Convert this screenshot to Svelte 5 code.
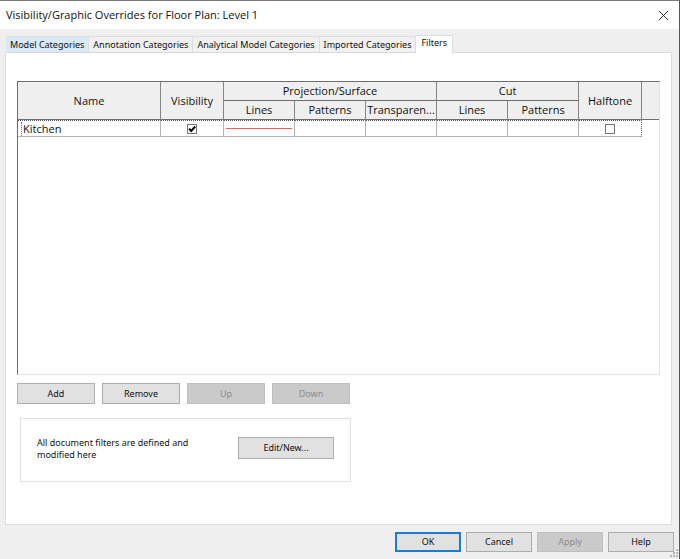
<script>
  const tabs = ['Model Categories', 'Annotation Categories', 'Analytical Model Categories', 'Imported Categories', 'Filters'];
  let active = $state('Filters');
  let visible = $state(true);
  let halftone = $state(false);
</script>

<div class="window">
  <header>
    <h1>Visibility/Graphic Overrides for Floor Plan: Level 1</h1>
    <button class="close" aria-label="Close">
      <svg width="11" height="11" viewBox="0 0 11 11" fill="none" stroke="#333" stroke-width="1"><path d="M1 1 10 10M10 1 1 10" /></svg>
    </button>
  </header>

  <main>
    <div class="tabs" role="tablist">
      {#each tabs as tab, i}
        <button role="tab" class="tab" class:hot={i === 0} class:active={tab === active} aria-selected={tab === active} onclick={() => (active = tab)}>{tab}</button>
      {/each}
    </div>

    <section class="panel">
      <div class="grid">
        <table>
          <colgroup>
            <col class="name" /><col class="mid" /><col class="sub" /><col class="sub" /><col class="sub" /><col class="sub" /><col class="sub" /><col class="mid" /><col />
          </colgroup>
          <thead>
            <tr>
              <th rowspan="2">Name</th>
              <th rowspan="2">Visibility</th>
              <th colspan="3">Projection/Surface</th>
              <th colspan="2">Cut</th>
              <th rowspan="2">Halftone</th>
              <td rowspan="2" class="rest"></td>
            </tr>
            <tr>
              <th>Lines</th>
              <th>Patterns</th>
              <th>Transparen...</th>
              <th>Lines</th>
              <th>Patterns</th>
            </tr>
          </thead>
          <tbody>
            <tr>
              <td class="label"><span>Kitchen</span></td>
              <td><input type="checkbox" aria-label="Visibility" bind:checked={visible} /></td>
              <td><div class="line"></div></td>
              <td></td>
              <td></td>
              <td></td>
              <td></td>
              <td class="end"><input type="checkbox" aria-label="Halftone" bind:checked={halftone} /></td>
              <td class="blank"></td>
            </tr>
          </tbody>
        </table>
      </div>

      <div class="actions">
        <button class="btn">Add</button>
        <button class="btn">Remove</button>
        <button class="btn" disabled>Up</button>
        <button class="btn" disabled>Down</button>
      </div>

      <div class="group">
        <p>All document filters are defined and modified here</p>
        <button class="btn">Edit/New...</button>
      </div>
    </section>
  </main>

  <footer>
    <button class="btn primary">OK</button>
    <button class="btn">Cancel</button>
    <button class="btn" disabled>Apply</button>
    <button class="btn">Help</button>
    <svg class="grip" width="10" height="10" viewBox="0 0 10 10" fill="#b5b5b5"><path d="M7 1h2v2H7zM7 4h2v2H7zM4 4h2v2H4zM7 7h2v2H7zM4 7h2v2H4zM1 7h2v2H1z" /></svg>
  </footer>
</div>

<style>
  :global(body) {
    margin: 0;
  }
  .window {
    box-sizing: border-box;
    min-height: 100vh;
    display: flex;
    flex-direction: column;
    border-top: 1px solid #7b7979;
    border-right: 1px solid #555;
    background: #efefef;
    color: #111;
    font: 9px/12px "Noto Sans", "Open Sans", sans-serif;
    position: relative;
  }
  button {
    font: inherit;
    color: inherit;
    padding: 0;
    margin: 0;
  }
  header {
    height: 28px;
    background: #fff;
    display: flex;
    align-items: center;
    justify-content: space-between;
    padding: 0 10px 0 6px;
  }
  h1 {
    margin: 0;
    font: 400 11px/16px "Open Sans", "Noto Sans", sans-serif;
  }
  .close {
    border: 0;
    background: none;
    width: 11px;
    height: 11px;
    display: flex;
  }
  main {
    flex: 1;
    display: flex;
    flex-direction: column;
    padding: 6px 7px 0 5px;
  }
  .tabs {
    display: flex;
    align-items: flex-end;
    padding-left: 1px;
  }
  .tab {
    height: 16px;
    padding: 0 4px;
    border: 1px solid #dcdcdc;
    border-width: 1px 1px 0 0;
    background: #f0f0f0;
    white-space: nowrap;
  }
  .tab.hot {
    background: #d8e9f7;
  }
  .tab.active {
    background: #fff;
    height: 18px;
    padding: 0 5px 3px;
    margin-bottom: -1px;
    z-index: 1;
  }
  .panel {
    flex: 1;
    border: 1px solid #dcdcdc;
    background: #fff;
    padding: 28px 11px 0 11px;
  }
  .grid {
    box-sizing: border-box;
    height: 294px;
    border: 1px solid #e3e3e3;
    border-left-color: #6e6e6e;
    border-top-color: #6e6e6e;
  }
  table {
    width: 100%;
    table-layout: fixed;
    border-collapse: separate;
    border-spacing: 0;
    font: 11px/16px "Open Sans", "Noto Sans", sans-serif;
  }
  .name {
    width: 143px;
  }
  .mid {
    width: 63px;
  }
  .sub {
    width: 71px;
  }
  th,
  td {
    box-sizing: border-box;
    padding: 0;
    text-align: center;
    font-weight: 400;
  }
  th {
    height: 19px;
    background: #efefef;
    border-right: 1px solid #858585;
    border-bottom: 1px solid #6e6e6e;
  }
  .rest {
    background: #efefef;
    border-bottom: 1px solid #6e6e6e;
  }
  tbody td {
    height: 17px;
    border-top: 1px dotted #555;
    border-right: 1px solid #b4b4b4;
    border-bottom: 1px solid #b4b4b4;
    line-height: 14px;
  }
  td.label {
    text-align: left;
    padding-left: 3px;
  }
  .label span {
    display: block;
    border-left: 1px dotted #777;
    padding-left: 1px;
  }
  td.end {
    border-right: 1px dotted #555;
  }
  td.blank {
    border: 0;
  }
  .line {
    height: 1px;
    margin: 0 2px;
    background: #fb5c5c;
  }
  input {
    appearance: none;
    box-sizing: border-box;
    display: block;
    width: 10px;
    height: 10px;
    margin: 0 auto;
    border: 1px solid #777;
    background: #fff;
  }
  input:checked {
    background: #fff url("data:image/svg+xml,%3Csvg xmlns='http://www.w3.org/2000/svg' viewBox='0 0 8 8'%3E%3Cpath d='M1 3.6 3.1 6 7.2 1.5' fill='none' stroke='%23000' stroke-width='1.9'/%3E%3C/svg%3E");
  }
  .btn {
    box-sizing: border-box;
    width: 78px;
    height: 21px;
    border: 1px solid #adadad;
    background: #e1e1e1;
  }
  .btn:disabled {
    background: #cacaca;
    border-color: #bfbfbf;
    color: #8c8c8c;
  }
  .actions {
    display: flex;
    gap: 7px;
    margin-top: 8px;
  }
  .group {
    box-sizing: border-box;
    width: 331px;
    min-height: 64px;
    margin: 14px 0 0 3px;
    padding: 18px 16px;
    border: 1px solid #e1e1e1;
    display: flex;
    justify-content: space-between;
    align-items: flex-start;
  }
  .group p {
    margin: 0;
    width: 170px;
  }
  .group .btn {
    width: 96px;
    height: 22px;
  }
  footer {
    display: flex;
    justify-content: flex-end;
    gap: 5px;
    padding: 7px 5px 7px 0;
  }
  footer .btn {
    width: 66px;
    height: 20px;
  }
  .btn.primary {
    border: 2px solid #1a7ad4;
  }
  .grip {
    position: absolute;
    right: 0;
    bottom: 1px;
  }
</style>
